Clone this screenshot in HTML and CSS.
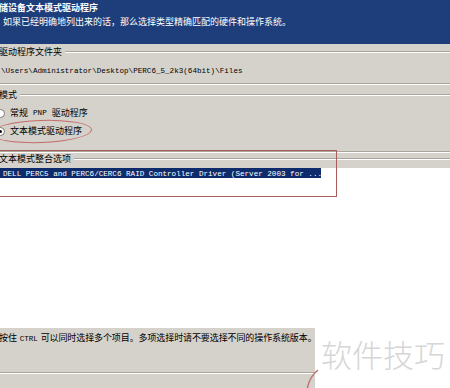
FILE: index.html
```html
<!DOCTYPE html>
<html lang="zh-CN">
<head>
	<meta charset="UTF-8">
	<title>文本模式驱动程序</title>
	<link rel="stylesheet" href="styles.css">
</head>
<body>
	<div class="page">
		<div class="header">
			<div class="title">储设备文本模式驱动程序</div>
			<div class="sub">如果已经明确地列出来的话，那么选择类型精确匹配的硬件和操作系统。</div>
		</div>

		<div class="panel">
			<div class="legend first"><span class="cut">驱动程序文件夹</span><i class="line"></i></div>
			<div class="path"><span class="en">\Users\Administrator\Desktop\PERC6_5_2k3(64bit)\Files</span></div>
			<div class="etch g1-end"></div>

			<div class="legend g2"><span class="cut">模式</span><i class="line"></i></div>
			<div class="radio-row r1"><span class="radio"></span>常规<span class="en gap">PNP</span>驱动程序</div>
			<div class="radio-row r2"><span class="radio on"></span>文本模式驱动程序</div>
			<div class="etch g2-end"></div>

			<div class="legend g3"><span class="cut">文本模式整合选项</span><i class="line"></i></div>
		</div>

		<div class="list">
			<div class="item sel"><span class="en">DELL PERC5 and PERC6/CERC6 RAID Controller Driver (Server 2003 for ...</span></div>
		</div>

		<div class="footer">
			<div class="foot-panel">
				<div class="hint"><span class="cut">按住<span class="en gap-s">CTRL</span>可以同时选择多个项目。多项选择时请不要选择不同的操作系统版本。</span></div>
				<div class="etch foot-line"></div>
			</div>
			<div class="watermark">软件技巧</div>
		</div>

		<div class="mark-ellipse"></div>
		<div class="mark-rect"></div>
		<svg class="mark-arc" width="40" height="30" viewBox="300 362 40 30">
			<path d="M318 370 Q309 377 307 390" fill="none" stroke="#c07070" stroke-width="1.5"/>
		</svg>
	</div>
</body>
</html>
```

FILE: styles.css
```css
body {
	margin: 0;
	background: #fff;
	font-family: "Noto Sans CJK SC", sans-serif;
	font-size: 9px;
	color: #000;
}

.page {
	position: relative;
	width: 450px;
	height: 388px;
	overflow: hidden;
}

.en {
	font-family: "Liberation Mono", "DejaVu Sans Mono", monospace;
	font-size: 7.6px;
}

.gap {
	margin: 0 5px;
}

.gap-s {
	margin: 0 3px;
}

/* header */
.header {
	height: 44px;
	box-sizing: border-box;
	padding-top: 2px;
	background: #1d3e7b;
	color: #fff;
}

.title {
	font-weight: bold;
	line-height: 12px;
	margin-left: -1px;
}

.sub {
	line-height: 12px;
	margin-top: 2px;
	padding-left: 3px;
}

/* gray panel */
.panel {
	background: #d5d2cb;
	height: 124px;
	overflow: hidden;
}

.legend {
	display: flex;
	align-items: center;
	height: 10px;
	line-height: 10px;
	white-space: nowrap;
}

.legend .line {
	flex: 1;
	margin-left: 3px;
	border-top: 1px solid #a9a69e;
	border-bottom: 1px solid #fff;
}

.cut {
	margin-left: -1px;
}

.first {
	margin-top: 3px;
}

.path {
	margin-top: 8px;
	line-height: 10px;
	padding-left: 1px;
	white-space: nowrap;
}

.etch {
	border-top: 1px solid #a9a69e;
	border-bottom: 1px solid #fff;
}

.g1-end {
	margin-top: 7px;
}

.g2 {
	margin-top: 5px;
}

.radio-row {
	display: flex;
	align-items: center;
	height: 12px;
	line-height: 12px;
	white-space: nowrap;
}

.r1 {
	margin-top: 7px;
}

.r2 {
	margin-top: 6px;
}

.radio {
	width: 7px;
	height: 7px;
	margin-left: -4px;
	margin-right: 5px;
	border-radius: 50%;
	background: #fff;
	border: 1px solid #7a7870;
	display: flex;
	align-items: center;
	justify-content: center;
}

.radio.on::after {
	content: "";
	width: 3px;
	height: 3px;
	border-radius: 50%;
	background: #111;
}

.g2-end {
	margin-top: 14px;
}

.g3 {
	margin-top: 1px;
}

/* list */
.list {
	height: 160px;
	background: #fff;
}

.item {
	height: 10px;
	line-height: 10px;
	padding-left: 3px;
	white-space: nowrap;
}

.sel {
	width: 318px;
	background: #0e2c6c;
	color: #fff;
}

/* footer */
.footer {
	display: flex;
	height: 60px;
}

.foot-panel {
	width: 315px;
	background: #d5d2cb;
	overflow: hidden;
}

.hint {
	margin-top: 5px;
	line-height: 10px;
	white-space: nowrap;
	letter-spacing: -0.1px;
}

.foot-line {
	margin-top: 28px;
}

.watermark {
	flex: 1;
	padding-left: 6px;
	padding-top: 6px;
	font-size: 31px;
	line-height: 40px;
	font-weight: 300;
	color: #d6d6d6;
	white-space: nowrap;
}

/* red annotation marks */
.mark-ellipse {
	position: absolute;
	left: -10px;
	top: 120px;
	width: 100px;
	height: 21px;
	border: 1.5px solid #c56b6b;
	border-radius: 50%;
	transform: rotate(-2deg);
}

.mark-rect {
	position: absolute;
	left: -2px;
	top: 150px;
	width: 337px;
	height: 45px;
	border: 1.5px solid #a85c5c;
}

.mark-arc {
	position: absolute;
	left: 300px;
	top: 362px;
}
```
